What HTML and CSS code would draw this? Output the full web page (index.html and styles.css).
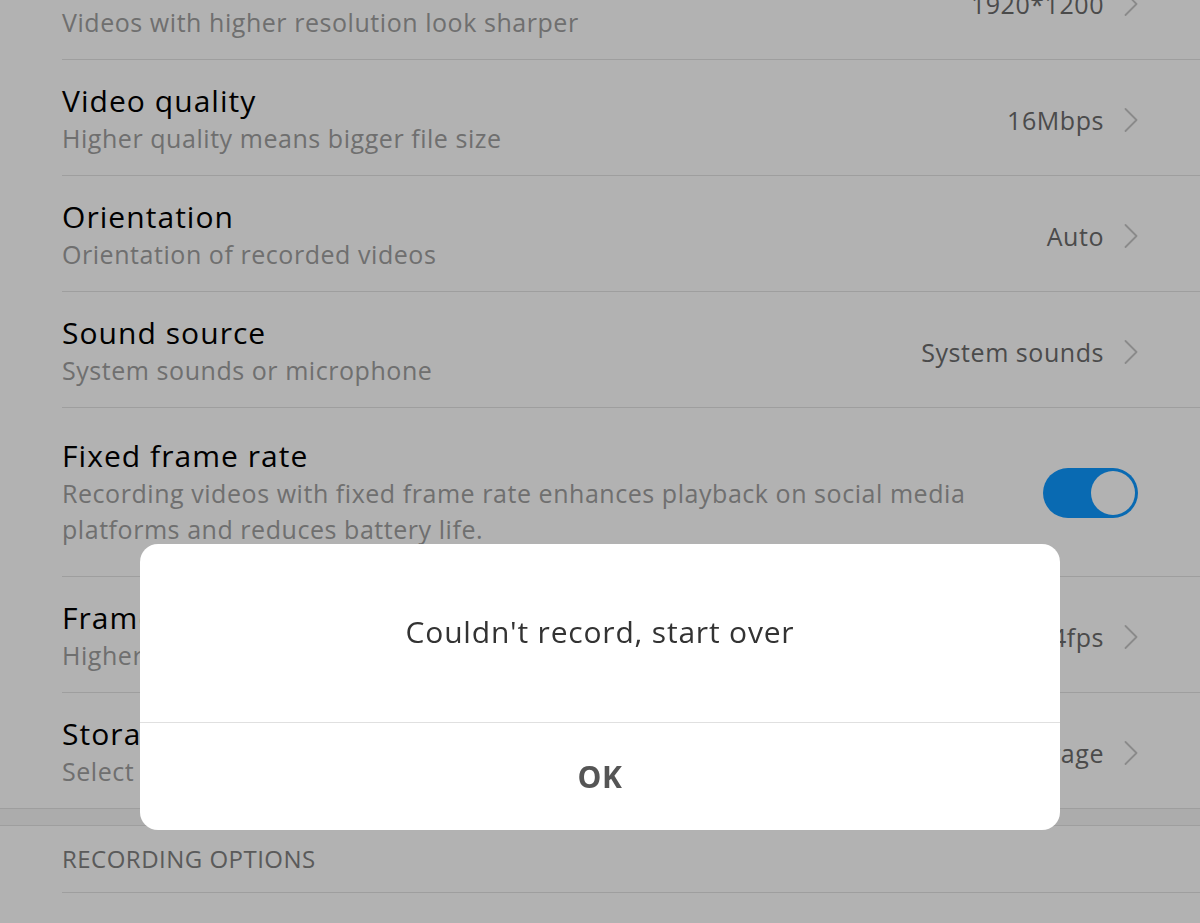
FILE: index.html
```html
<!DOCTYPE html>
<html lang="en">
<head>
<meta charset="utf-8">
<title>Screen recorder settings</title>
<link rel="stylesheet" href="styles.css">
</head>
<body>
<div class="page">
  <div class="group">
    <div class="row">
      <div class="text"><div class="title">Resolution</div><div class="sub">Videos with higher resolution look sharper</div></div>
      <div class="value">1920*1200</div>
      <svg class="chev" viewBox="0 0 14 24" width="14" height="24"><path d="M1.5 1 L12.5 12 L1.5 23"/></svg>
    </div>
    <div class="row">
      <div class="text"><div class="title">Video quality</div><div class="sub">Higher quality means bigger file size</div></div>
      <div class="value">16Mbps</div>
      <svg class="chev" viewBox="0 0 14 24" width="14" height="24"><path d="M1.5 1 L12.5 12 L1.5 23"/></svg>
    </div>
    <div class="row">
      <div class="text"><div class="title">Orientation</div><div class="sub">Orientation of recorded videos</div></div>
      <div class="value">Auto</div>
      <svg class="chev" viewBox="0 0 14 24" width="14" height="24"><path d="M1.5 1 L12.5 12 L1.5 23"/></svg>
    </div>
    <div class="row">
      <div class="text"><div class="title">Sound source</div><div class="sub">System sounds or microphone</div></div>
      <div class="value">System sounds</div>
      <svg class="chev" viewBox="0 0 14 24" width="14" height="24"><path d="M1.5 1 L12.5 12 L1.5 23"/></svg>
    </div>
    <div class="row row-tall">
      <div class="text text-wrap"><div class="title">Fixed frame rate</div><div class="sub sub-multi">Recording videos with fixed frame rate enhances playback on social media platforms and reduces battery life.</div></div>
      <div class="toggle on"><div class="knob"></div></div>
    </div>
    <div class="row">
      <div class="text"><div class="title">Frame rate</div><div class="sub">Higher frame rates make videos smoother</div></div>
      <div class="value">24fps</div>
      <svg class="chev" viewBox="0 0 14 24" width="14" height="24"><path d="M1.5 1 L12.5 12 L1.5 23"/></svg>
    </div>
    <div class="row">
      <div class="text"><div class="title">Storage location</div><div class="sub">Select where to save recordings</div></div>
      <div class="value">Internal storage</div>
      <svg class="chev" viewBox="0 0 14 24" width="14" height="24"><path d="M1.5 1 L12.5 12 L1.5 23"/></svg>
    </div>
  </div>
  <div class="section-gap"></div>
  <div class="section-header">RECORDING OPTIONS</div>
</div>

<div class="scrim">
  <div class="dialog">
    <div class="message">Couldn't record, start over</div>
    <div class="action">OK</div>
  </div>
</div>
</body>
</html>
```

FILE: styles.css
```css
html, body {
  margin: 0;
  padding: 0;
  background: #ffffff;
  overflow: hidden;
}

body {
  font-family: "Open Sans", "Noto Sans", "Liberation Sans", sans-serif;
  height: 923px;
}

.page {
  background: #ffffff;
}

.group {
  margin-top: -56px;
  border-bottom: 1px solid #e2e2e2;
}

.row {
  display: flex;
  align-items: center;
  margin-left: 62px;
  padding: 23px 62px 18px 0;
  border-bottom: 1px solid #e2e2e2;
}

.row:last-child {
  border-bottom: none;
}

.row-tall {
  padding-top: 30px;
  padding-bottom: 29px;
}

.text {
  flex: 1;
  min-width: 0;
}

.text-wrap {
  margin-right: 30px;
}

.title {
  font-size: 30px;
  line-height: 36px;
  color: #000000;
  white-space: nowrap;
  letter-spacing: 0.035em;
}

.sub {
  font-size: 25px;
  line-height: 38px;
  color: #a0a0a0;
  white-space: nowrap;
  letter-spacing: 0.022em;
}

.sub-multi {
  white-space: normal;
  line-height: 36px;
  margin-top: 1px;
}

.value {
  font-size: 25px;
  line-height: 36px;
  color: #6c6c6c;
  margin-left: 20px;
  white-space: nowrap;
  letter-spacing: 0.022em;
}

.chev {
  margin-left: 20px;
  flex: none;
}

.chev path {
  fill: none;
  stroke: #c6c6c6;
  stroke-width: 1.8;
  stroke-linecap: round;
  stroke-linejoin: round;
}

.toggle {
  flex: none;
  width: 95px;
  height: 50px;
  border-radius: 25px;
  background: #d6d6d6;
  display: flex;
  align-items: center;
  justify-content: flex-start;
  padding: 0 3px;
  box-sizing: border-box;
}

.toggle.on {
  background: #0e98ff;
  justify-content: flex-end;
}

.knob {
  width: 44px;
  height: 44px;
  border-radius: 50%;
  background: #ffffff;
}

.section-gap {
  height: 16px;
  background: #f7f7f7;
  border-bottom: 1px solid #e2e2e2;
}

.section-header {
  margin-left: 62px;
  padding: 17px 0;
  font-size: 24px;
  line-height: 32px;
  color: #828282;
  letter-spacing: 0.02em;
  border-bottom: 1px solid #e2e2e2;
}

.scrim {
  position: fixed;
  inset: 0;
  background: rgba(0, 0, 0, 0.3);
  display: flex;
  justify-content: center;
  align-items: flex-end;
  padding-bottom: 93px;
  box-sizing: border-box;
}

.dialog {
  width: 920px;
  background: #ffffff;
  border-radius: 18px;
  overflow: hidden;
}

.message {
  height: 179px;
  display: flex;
  align-items: center;
  justify-content: center;
  font-size: 30px;
  letter-spacing: 0.027em;
  color: #333333;
  border-bottom: 1px solid #e0e0e0;
  padding-bottom: 3px;
  box-sizing: border-box;
}

.action {
  height: 107px;
  display: flex;
  align-items: center;
  justify-content: center;
  font-size: 30px;
  font-weight: 700;
  letter-spacing: 0.02em;
  color: #555555;
}
```
